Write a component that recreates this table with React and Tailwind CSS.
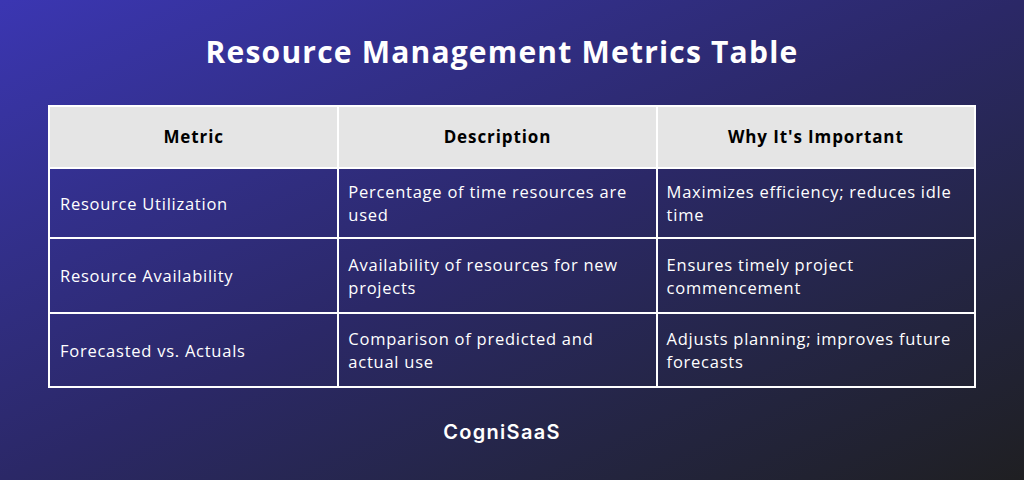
import React from "react";

const rows = [
  {
    m: "Resource Utilization",
    d: "Percentage of time resources are used",
    w: "Maximizes efficiency; reduces idle time",
    h: "h-[70px]",
  },
  {
    m: "Resource Availability",
    d: "Availability of resources for new projects",
    w: "Ensures timely project commencement",
    h: "h-[75px]",
  },
  {
    m: "Forecasted vs. Actuals",
    d: "Comparison of predicted and actual use",
    w: "Adjusts planning; improves future forecasts",
    h: "h-[74px]",
  },
];

export default function App() {
  return (
    <div
      className="w-[1024px] h-[480px] overflow-hidden flex flex-col items-center bg-linear-to-br from-[#3b36b2] via-[#2b2867] to-[#1f1f22] text-white"
      style={{ fontFamily: '"Open Sans", "Liberation Sans", sans-serif' }}
    >
      <h1 className="mt-[34px] mr-[20px] h-[36px] leading-[36px] text-[30px] font-bold tracking-[1.2px]">
        Resource Management Metrics Table
      </h1>
      <table className="mt-[35px] w-[928px] border-collapse border-2 border-white">
        <colgroup>
          <col className="w-[290px]" />
          <col className="w-[319px]" />
          <col className="w-[319px]" />
        </colgroup>
        <thead>
          <tr className="h-[62px] bg-[#e5e5e5] text-black text-[17px] tracking-[0.9px]">
            <th className="border-2 border-white font-bold text-center">Metric</th>
            <th className="border-2 border-white font-bold text-center">Description</th>
            <th className="border-2 border-white font-bold text-center">Why It's Important</th>
          </tr>
        </thead>
        <tbody className="text-[16.5px] tracking-[0.75px] font-medium">
          {rows.map((r) => (
            <tr key={r.m} className={r.h}>
              <td className="border-2 border-white pl-[10px] pr-[14px] leading-[23px] align-middle">{r.m}</td>
              <td className="border-2 border-white pl-[9px] pr-[14px] leading-[23px] align-middle">{r.d}</td>
              <td className="border-2 border-white pl-[9px] pr-[14px] leading-[23px] align-middle">{r.w}</td>
            </tr>
          ))}
        </tbody>
      </table>
      <div
        className="mt-[29px] mr-[20px] text-[20px] font-semibold tracking-[1.3px]"
        style={{ fontFamily: 'Inter, "DejaVu Sans", sans-serif' }}
      >
        CogniSaaS
      </div>
    </div>
  );
}
